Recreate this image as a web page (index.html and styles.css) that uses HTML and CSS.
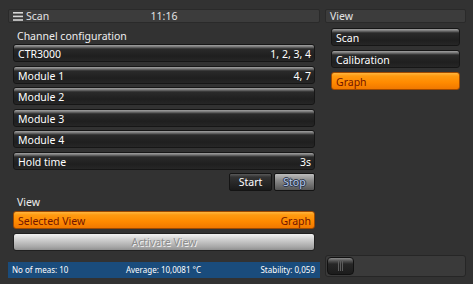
FILE: index.html
```html
<!DOCTYPE html>
<html>
  <head>
    <meta charset="UTF-8" />
    <title>Scan</title>
    <link rel="stylesheet" href="styles.css">
  </head>
  <body>
    <div class="screen">
      <div class="main">
        <div class="bar">
          <svg class="menu-icon" width="10" height="9" viewBox="0 0 10 9">
            <rect x="0" y="0" width="10" height="1.6" fill="#d8d8d8"/>
            <rect x="0" y="3.6" width="10" height="1.6" fill="#d8d8d8"/>
            <rect x="0" y="7.2" width="10" height="1.6" fill="#d8d8d8"/>
          </svg>
          <span class="bar-title">Scan</span>
          <span class="clock">11:16</span>
        </div>
        <div class="label">Channel configuration</div>
        <div class="list">
          <div class="row"><span>CTR3000</span><span>1, 2, 3, 4</span></div>
          <div class="row"><span>Module 1</span><span>4, 7</span></div>
          <div class="row"><span>Module 2</span><span></span></div>
          <div class="row"><span>Module 3</span><span></span></div>
          <div class="row"><span>Module 4</span><span></span></div>
          <div class="row"><span>Hold time</span><span>3s</span></div>
        </div>
        <div class="actions">
          <div class="btn start">Start</div>
          <div class="btn stop">Stop</div>
        </div>
        <div class="label view-label">View</div>
        <div class="row selected"><span>Selected View</span><span>Graph</span></div>
        <div class="activate">Activate View</div>
        <div class="status">
          <span class="s-left">No of meas: 10</span>
          <span class="s-mid">Average: 10,0081 °C</span>
          <span class="s-right">Stability: 0,059</span>
        </div>
      </div>
      <div class="side">
        <div class="bar side-bar"><span class="bar-title">View</span></div>
        <div class="list side-list">
          <div class="row"><span>Scan</span></div>
          <div class="row"><span>Calibration</span></div>
          <div class="row selected"><span>Graph</span></div>
        </div>
        <div class="slider">
          <div class="thumb"><i></i><i></i><i></i></div>
        </div>
      </div>
    </div>
  </body>
</html>
```
FILE: styles.css
```css
* {
  box-sizing: border-box;
}
html {
  background-color: #323232;
}
body {
  margin: 0;
  font-family: "Noto Sans", "Open Sans", sans-serif;
  font-size: 10.5px;
  color: #ffffff;
}
.screen {
  display: flex;
  gap: 5px;
  padding: 9px 0 0 8px;
  width: 473px;
  height: 284px;
}
.main {
  width: 312px;
  display: flex;
  flex-direction: column;
}
.side {
  width: 141px;
  display: flex;
  flex-direction: column;
}
.bar {
  position: relative;
  height: 14px;
  display: flex;
  align-items: center;
  padding-left: 4px;
  background: #3c3c3c;
  border: 1px solid #2a2a2a;
  border-radius: 2px;
  color: #e4e4e4;
}
.menu-icon {
  margin-right: 3px;
}
.clock {
  position: absolute;
  left: 0;
  right: 0;
  text-align: center;
}
.label {
  height: 14px;
  line-height: 14px;
  margin: 6px 0 0 9px;
  color: #eeeeee;
}
.list {
  display: flex;
  flex-direction: column;
  gap: 3.5px;
  margin: 1px 5px 0 5px;
}
.row {
  height: 18px;
  display: flex;
  justify-content: space-between;
  align-items: center;
  padding: 2px 3px 0 4px;
  border: 1px solid #161616;
  border-radius: 3px;
  background: linear-gradient(#a0a0a0 0, #8a8a8a 1px, #707070 2px, #4a4a4a 3px, #2a2a2a 4px, #1f1f1f 70%, #262626 100%);
}
.row.selected {
  margin: 0 5px;
  border-color: #a04a00;
  color: #741600;
  background: linear-gradient(#ffb640 0, #ff9a10 3px, #ff8a00 60%, #f07800 100%);
}
.side-list .row.selected {
  margin: 0;
}
.actions {
  display: flex;
  justify-content: flex-end;
  gap: 2px;
  margin: 3px 5px 0 0;
}
.btn {
  height: 18px;
  line-height: 17px;
  text-align: center;
  border: 1px solid #141414;
  border-radius: 2px;
}
.start {
  width: 43px;
  background: linear-gradient(#5a5a5a 0, #333333 3px, #1a1a1a 100%);
}
.stop {
  width: 41px;
  color: #b4c8ec;
  text-shadow: 1px 0 0 #2a3448, -1px 0 0 #2a3448, 0 1px 0 #2a3448, 0 -1px 0 #2a3448;
  background: linear-gradient(#bdbdbd 0, #8a8a8a 40%, #555555 100%);
}
.view-label {
  margin-top: 4px;
  margin-bottom: 2px;
}
.activate {
  height: 18px;
  line-height: 17px;
  margin: 4px 5px 0 5px;
  text-align: center;
  color: #8c8c8c;
  text-shadow: 1px 1px 0 #f0f0f0;
  border: 1px solid #202020;
  border-radius: 3px;
  background: linear-gradient(#f2f2f2 0, #d4d4d4 30%, #a8a8a8 80%, #909090 100%);
}
.status {
  display: grid;
  grid-template-columns: 1fr auto 1fr;
  align-items: center;
  height: 16px;
  margin-top: 11px;
  padding: 0 5px 0 4px;
  background: #1a4c7c;
  font-size: 8px;
}
.s-right {
  justify-self: end;
}
.side-bar {
  padding-left: 4px;
}
.side-list {
  margin: 5px 6px 0 6px;
  gap: 4px;
}
.slider {
  margin-top: auto;
  margin-bottom: 7px;
  height: 22px;
  padding: 1px;
  background: #3a3a3a;
  border: 1px solid #262626;
  border-radius: 3px;
}
.thumb {
  width: 27px;
  height: 100%;
  display: flex;
  justify-content: center;
  gap: 1px;
  padding-top: 3px;
  border: 1px solid #111111;
  border-radius: 4px;
  background: linear-gradient(#8a8a8a 0, #505050 3px, #262626 6px, #1c1c1c 100%);
}
.thumb i {
  width: 1px;
  height: 10px;
  background: #5c5c5c;
}
```
